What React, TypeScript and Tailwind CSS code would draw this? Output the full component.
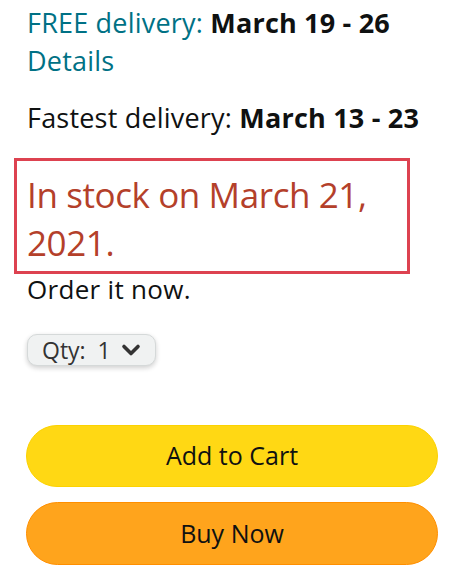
const ChevronDown = () => (
  <svg width="22" height="20" viewBox="0 0 22 20" className="ml-[9px]">
    <path d="M4 6.5l7 7 7-7" fill="none" stroke="#333" strokeWidth="3.6" strokeLinecap="round" strokeLinejoin="round" />
  </svg>
);

export default function App() {
  return (
    <div className="min-h-[577px] w-[465px] bg-white font-['Open_Sans',sans-serif] text-[#0f1111]">
      <div className="pl-[27px] pt-[4px]">
        <div className="text-[27px] leading-[38px] tracking-[0.2px]">
          <span className="text-[#007185]">FREE delivery: </span>
          <span className="font-bold">March 19 - 26</span>
        </div>
        <div className="text-[27px] leading-[38px] tracking-[0.2px] text-[#007185]">Details</div>
        <div className="mt-[19px] text-[27px] leading-[38px] tracking-[0.2px]">
          Fastest delivery: <span className="font-bold">March 13 - 23</span>
        </div>
      </div>

      <div className="ml-[14px] mt-[21px] w-[396px] border-[3px] border-[#dd4250] pb-[4px] pl-[10px] pt-[10px]">
        <div className="text-[35px] leading-[48px] tracking-[-0.4px] text-[#b4402a]">
          In stock on March 21, 2021.
        </div>
      </div>

      <div className="pl-[27px]">
        <div className="text-[26px] leading-[30px] tracking-[0.3px]">Order it now.</div>

        <div className="mt-[30px] inline-flex h-[32px] w-[129px] items-center rounded-[10px] border border-[#d5d9d9] bg-[#f0f2f2] pl-[14px] text-[23px] text-[#333] shadow-[0_2px_5px_rgba(15,17,17,0.2)]">
          Qty:&nbsp; 1
          <ChevronDown />
        </div>
      </div>

      <div className="ml-[26px] mt-[59px] flex w-[412px] flex-col gap-[15px]">
        <button className="flex h-[62px] items-center justify-center rounded-full border border-[#fcd200] bg-[#ffd814] text-[25px] text-[#0f1111]">
          Add to Cart
        </button>
        <button className="flex h-[63px] items-center justify-center rounded-full border border-[#ff8f00] bg-[#ffa41c] text-[25px] text-[#0f1111]">
          Buy Now
        </button>
      </div>
    </div>
  );
}
